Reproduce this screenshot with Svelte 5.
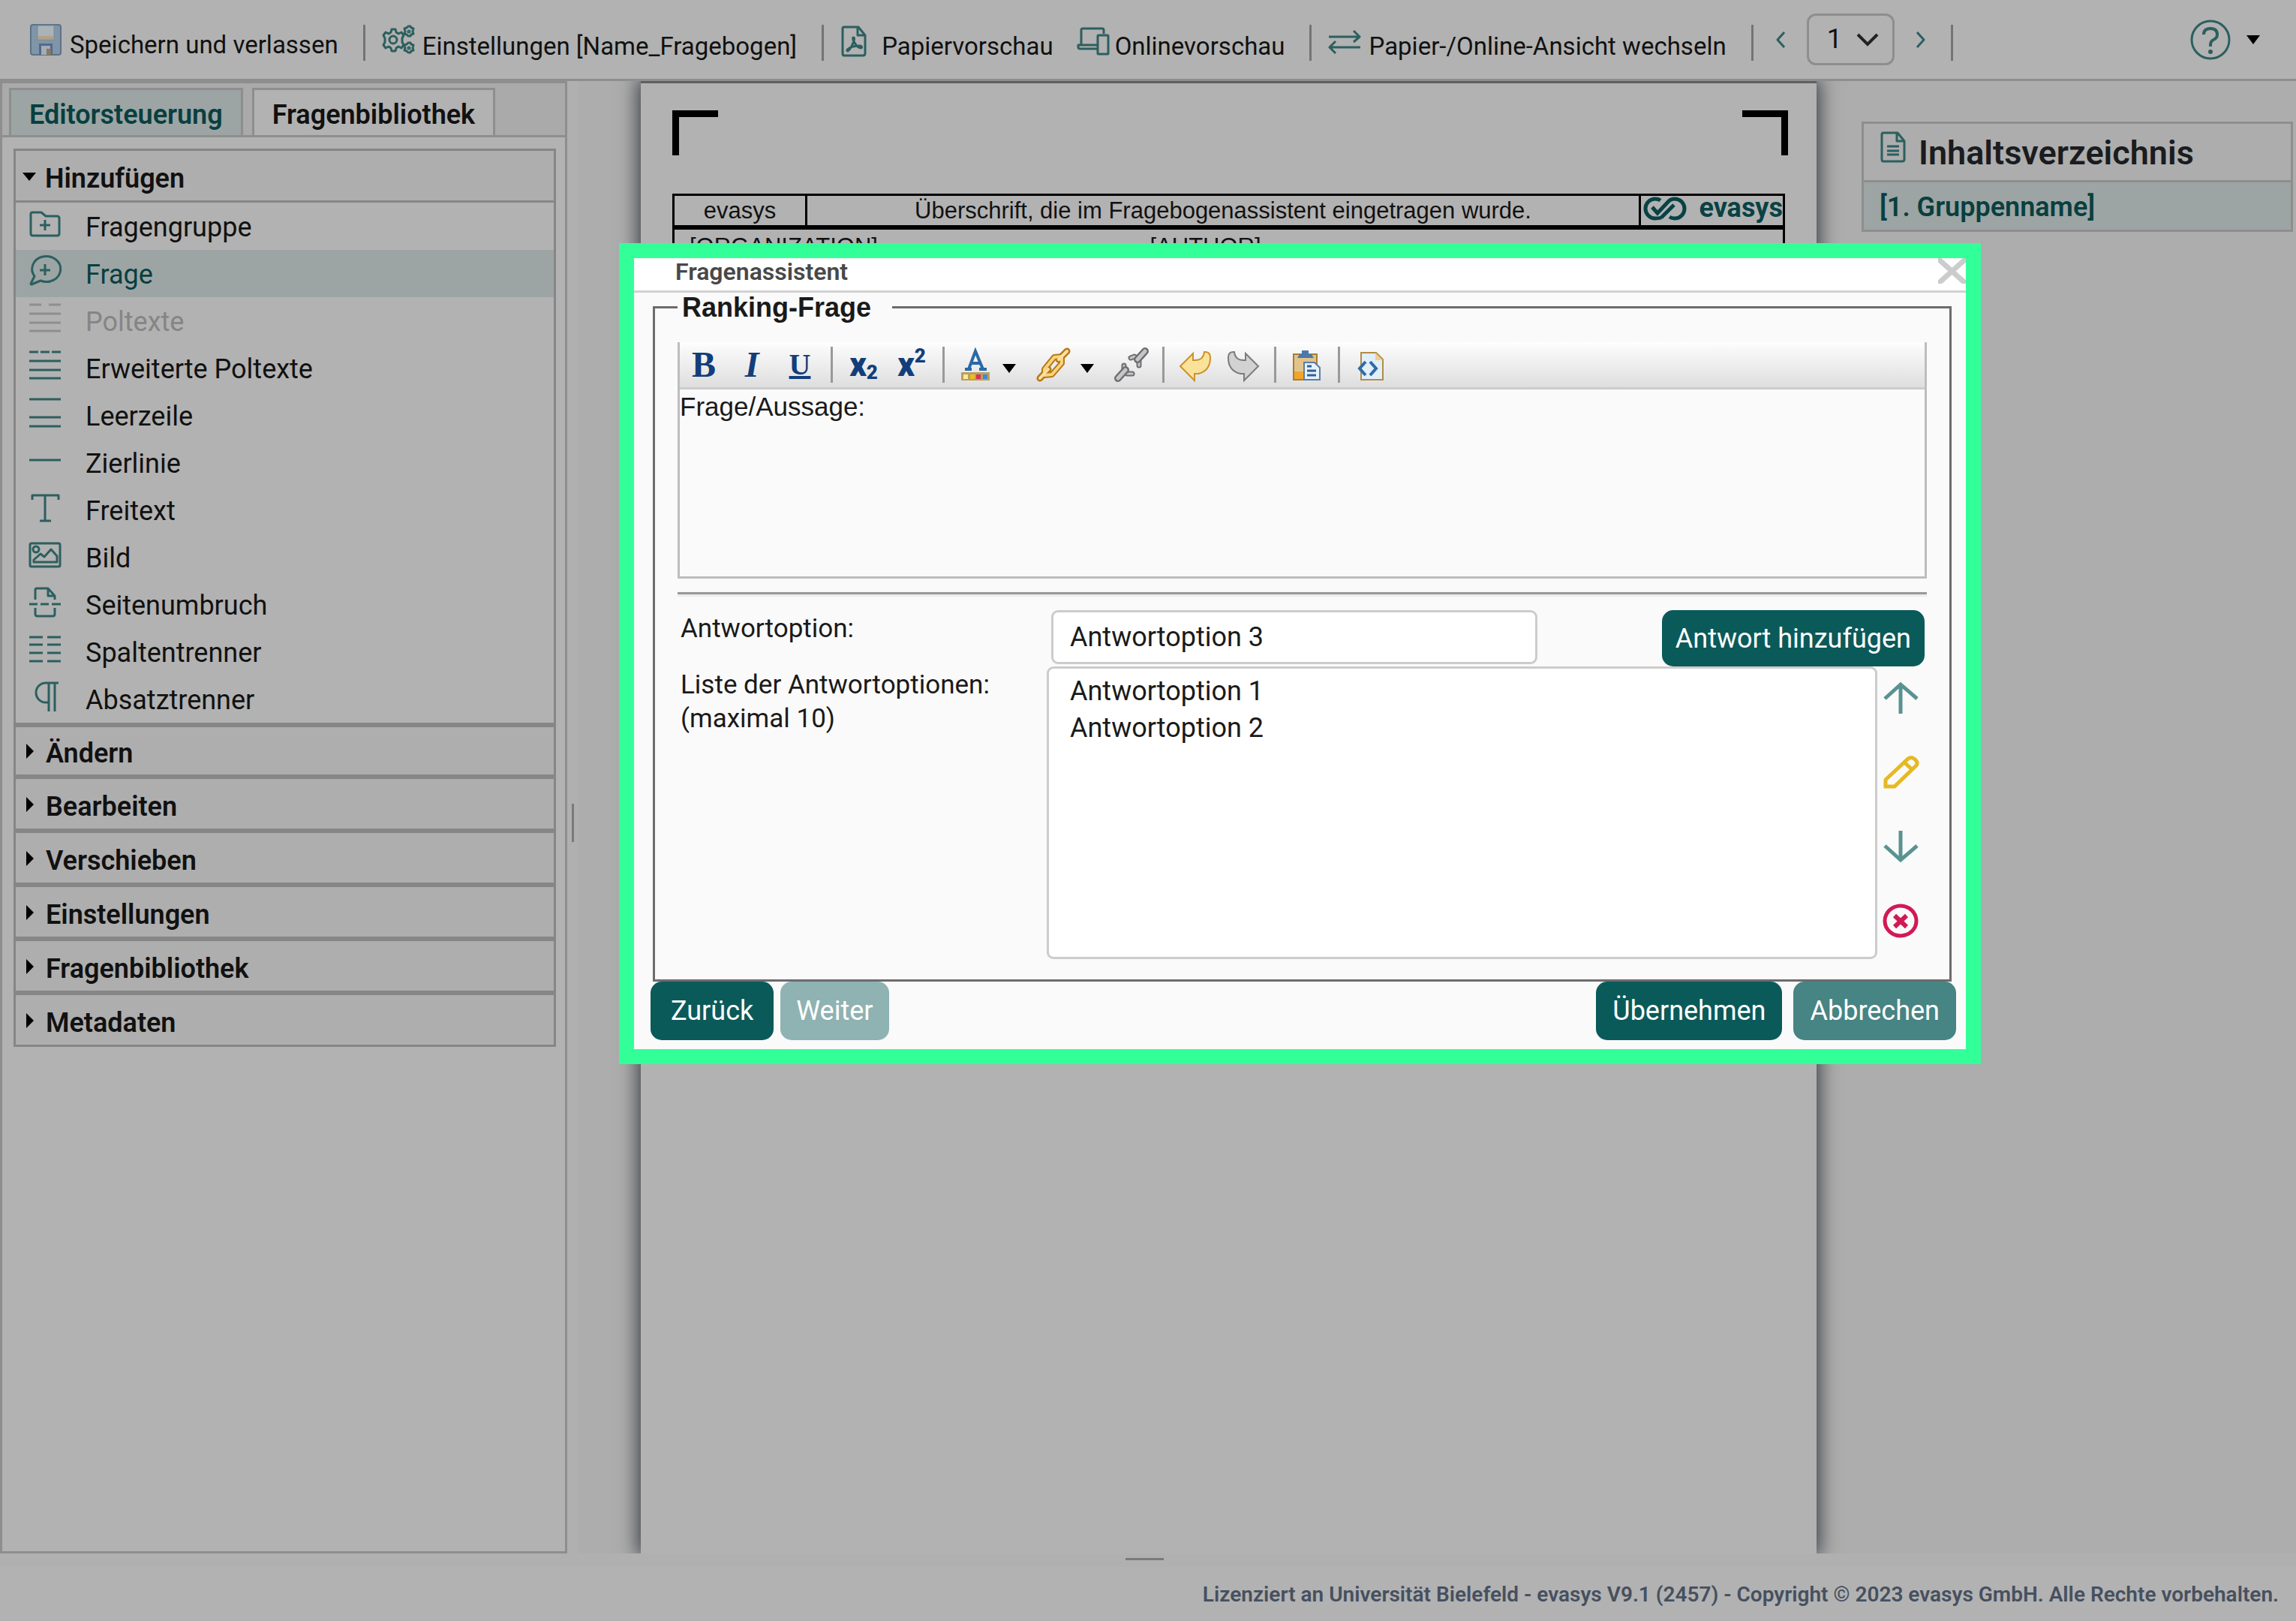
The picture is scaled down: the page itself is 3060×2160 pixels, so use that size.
<script lang="ts">
  type Item = { label: string; icon: string; state?: 'active' | 'disabled' }

  const items: Item[] = [
    { label: 'Fragengruppe', icon: 'M4 6h12l6 5h15q3 0 3 3v20q0 3-3 3H5q-3 0-3-3V8q0-2 2-2zM21 16v14M14 23h14' },
    { label: 'Frage', icon: 'M7 28A19 17 0 1 1 15 34L3 39Q1 39 3 36ZM21 12v15M14 20h14', state: 'active' },
    { label: 'Poltexte', icon: 'M0 3h16M26 3h16M0 15h42M0 27h42M0 38h42', state: 'disabled' },
    { label: 'Erweiterte Poltexte', icon: 'M0 3h12M15 3h12M30 3h12M0 15h42M0 27h42M0 38h42' },
    { label: 'Leerzeile', icon: 'M0 3h42M0 27h42M0 39h42' },
    { label: 'Zierlinie', icon: 'M0 21h42' },
    { label: 'Freitext', icon: 'M4 11V5h35v6M21 5v34M14 39h15' },
    { label: 'Bild', icon: 'M3 6h36q2 0 2 2v27q0 2-2 2H3q-2 0-2-2V8q0-2 2-2zM13 14a4 4 0 1 1-8 0 4 4 0 0 1 8 0M6 31V28l9-8 5 4 9-10 8 9v8z' },
    { label: 'Seitenumbruch', icon: 'M8 18V5q0-2 2-2h15l9 10v5M25 3v10h9M0 24h11M15 24h11M30 24h12M8 29v8q0 3 3 3h20q3 0 3-3v-8' },
    { label: 'Spaltentrenner', icon: 'M0 5h18M24 5h18M0 15h18M24 15h18M0 26h18M24 26h18M0 37h18M24 37h18' },
    { label: 'Absatztrenner', icon: 'M39 3H22a13 13 0 0 0 0 26h4M26 3v38M34 3v38' },
  ]

  const sections = ['Ändern', 'Bearbeiten', 'Verschieben', 'Einstellungen', 'Fragenbibliothek', 'Metadaten']

  let answer = $state('Antwortoption 3')
  let answers = $state(['Antwortoption 1', 'Antwortoption 2'])

  function addAnswer() {
    if (answer.trim() && answers.length < 10) {
      answers.push(answer)
      answer = ''
    }
  }
</script>

<div class="app">
  <header class="topbar">
    <button class="tool save">
      <svg class="icon-42" viewBox="0 0 42 42">
        <rect x="1" y="1" width="40" height="40" rx="3" fill="#8095a8" stroke="#5d7286" stroke-width="2" />
        <rect x="10" y="2" width="22" height="19" fill="#a9b3b8" stroke="#7d8a94" />
        <path d="M11 16h20v4H11z" fill="#b3a184" />
        <rect x="12" y="26" width="18" height="15" fill="#4e6a90" />
        <path d="M15 29h12v12H15z" fill="#a6acb4" />
        <path d="M22 33h6v8h-6z" fill="#8b7861" />
      </svg>
      Speichern und verlassen
    </button>
    <span class="sep"></span>
    <button class="tool settings low">
      <svg class="icon-42 line" viewBox="0 0 42 42">
        <path d="M12 5h5l1 4 3 2 4-2 3 4-2 4v5l2 4-3 4-4-2-3 2-1 4h-5l-1-4-3-2-4 2-3-4 2-4v-5l-2-4 3-4 4 2 3-2z" />
        <circle cx="14" cy="19" r="5" />
        <path d="M34 1h3l1 2 3 1-1 4 1 3-3 1-1 2h-3l-2-2-3-1 1-3-1-4 3-1zM34 23h3l1 2 3 1-1 4 1 3-3 1-1 2h-3l-2-2-3-1 1-3-1-4 3-1z" />
        <circle cx="35" cy="8" r="1" />
        <circle cx="35" cy="30" r="1" />
      </svg>
      Einstellungen [Name_Fragebogen]
    </button>
    <span class="sep"></span>
    <button class="tool paper-view low">
      <svg class="icon-pdf line" viewBox="0 0 34 42">
        <path d="M4 2h19l9 11v24q0 3-3 3H4q-2 0-2-3V4q0-2 2-2zM22 2v11h10" />
        <path d="M16 16q3 0 0 7-3 8-7 11-3-1 2-4 6-3 14-3 4 1 2 3-5 0-9-7-3-4-2-7z" />
      </svg>
      Papiervorschau
    </button>
    <button class="tool online low">
      <svg class="icon-42 line" viewBox="0 0 42 42">
        <path d="M5 25V6q0-2 2-2h26q2 0 2 2v5M26 26H1v3q0 2 3 2h22" />
        <rect x="27" y="13" width="14" height="25" rx="1" />
      </svg>
      Onlinevorschau
    </button>
    <span class="sep"></span>
    <button class="tool swap low">
      <svg class="icon-42 line" viewBox="0 0 42 42">
        <path d="M0 15h41M33 7l8 8-8 7M42 29H1M9 21l-8 8 8 8" />
      </svg>
      Papier-/Online-Ansicht wechseln
    </button>
    <span class="sep"></span>
    <nav class="pager" aria-label="Seite">
      <button aria-label="Vorherige Seite">
        <svg class="chev line" viewBox="0 0 14 24"><path d="M12 2L3 12l9 10" /></svg>
      </button>
      <span class="page-select">
        <select aria-label="Seitenzahl"><option>1</option></select>
        <svg viewBox="0 0 30 18"><path d="M2 2l13 13L28 2" /></svg>
      </span>
      <button aria-label="Nächste Seite">
        <svg class="chev line" viewBox="0 0 14 24"><path d="M2 2l9 10-9 10" /></svg>
      </button>
    </nav>
    <span class="sep"></span>
    <button class="help" aria-label="Hilfe">
      <svg class="icon-help line" viewBox="0 0 54 54">
        <circle cx="27" cy="27" r="25" />
        <path class="mark" d="M18 20q0-8 9-8t9 8q0 5-5 7-4 2-4 7v2" />
        <circle class="dot" cx="27" cy="43" r="3" />
      </svg>
      <span class="caret"></span>
    </button>
  </header>

  <main class="workspace">
    <aside class="sidebar">
      <div class="tabs">
        <button class="tab active">Editorsteuerung</button>
        <button class="tab">Fragenbibliothek</button>
      </div>
      <div class="accordion">
        <section class="section open">
          <button class="section-head"><span class="marker"></span>Hinzufügen</button>
          <ul>
            {#each items as item}
              <li>
                <button class="entry {item.state ?? ''}" disabled={item.state === 'disabled'}>
                  <svg class="icon-42" viewBox="0 0 42 42"><path d={item.icon} /></svg>
                  {item.label}
                </button>
              </li>
            {/each}
          </ul>
        </section>
        {#each sections as name}
          <section class="section">
            <button class="section-head"><span class="marker"></span>{name}</button>
          </section>
        {/each}
      </div>
    </aside>
    <div class="splitter"><span></span></div>

    <div class="canvas">
      <article class="paper">
        <div class="corners"><i class="corner left"></i><i class="corner right"></i></div>
        <div class="form-head">
          <div class="form-row">
            <span class="cell name">evasys</span>
            <span class="cell title">Überschrift, die im Fragebogenassistent eingetragen wurde.</span>
            <span class="cell brand">
              <svg viewBox="0 0 58 32">
                <path d="M24 28Q21 29 16 29A13 13 0 0 1 16 3q4 0 7 2M12 14l7 8L34 6q3-3 8-3a13 13 0 0 1 0 26q-4 0-7-2M24 28L41 11" />
              </svg>
              <b>evasys</b>
            </span>
          </div>
          <div class="form-meta"><span>[ORGANIZATION]</span><span>[AUTHOR]</span></div>
        </div>
      </article>
    </div>

    <aside class="toc">
      <h2>
        <svg class="icon-pdf line" viewBox="0 0 34 42">
          <path d="M4 2h19l9 11v24q0 3-3 3H4q-2 0-2-3V4q0-2 2-2zM22 2v11h10M9 20h16M9 26h16M9 31h16" />
        </svg>
        Inhaltsverzeichnis
      </h2>
      <a href="#gruppe-1">[1. Gruppenname]</a>
    </aside>
  </main>

  <div class="bottom-handle"><span></span></div>
  <footer>
    Lizenziert an Universität Bielefeld - evasys V9.1 (2457) - Copyright © 2023 evasys GmbH. Alle Rechte vorbehalten.
  </footer>

  <div class="dialog" role="dialog" aria-labelledby="dialog-title">
    <div class="dialog-head">
      <h1 id="dialog-title">Fragenassistent</h1>
      <button class="close" aria-label="Schließen">
        <svg viewBox="0 0 37 34"><path d="M-1 0l38 34M38 0L0 34" /></svg>
      </button>
    </div>

    <fieldset>
      <legend>Ranking-Frage</legend>

      <div class="editor">
        <div class="editor-bar">
          <button class="ed glyph bold" aria-label="Fett">B</button>
          <button class="ed glyph italic" aria-label="Kursiv">I</button>
          <button class="ed glyph underline" aria-label="Unterstrichen">U</button>
          <span class="ed-sep"></span>
          <button class="ed script" aria-label="Tiefgestellt">x<sub>2</sub></button>
          <button class="ed script" aria-label="Hochgestellt">x<sup>2</sup></button>
          <span class="ed-sep"></span>
          <button class="ed menu" aria-label="Textfarbe">
            <svg class="ed-icon" viewBox="0 0 44 44">
              <path d="M13 28L22 4l10 24M16 20h12M8 28h9M27 28h10" fill="none" stroke="#2a68a8" stroke-width="4" />
              <path d="M3 32h38v11H3z" fill="#b9a05c" />
              <path d="M6 35h6v6H6z" fill="#ffe9a0" />
              <path d="M15 35h6v6h-6z" fill="#eebc18" />
              <path d="M23 35h6v6h-6z" fill="#d8315b" />
              <path d="M32 35h6v6h-6z" fill="#3b8ad8" />
            </svg>
            <span class="caret"></span>
          </button>
          <button class="ed menu" aria-label="Link einfügen">
            <svg class="ed-icon" viewBox="0 0 44 44">
              <g fill="none" stroke-linecap="round" stroke-linejoin="round">
                <path d="M10 28l13-16 10-1v9L20 35l-10 1z" stroke="#b47a18" stroke-width="8" />
                <path d="M4 40l11-12M29 15l11-11" stroke="#b47a18" stroke-width="9" />
                <path d="M10 28l13-16 10-1v9L20 35l-10 1z" stroke="#fbd27c" stroke-width="4" />
                <path d="M4 40l11-12M29 15l11-11" stroke="#fde0a0" stroke-width="4" />
              </g>
            </svg>
            <span class="caret"></span>
          </button>
          <button class="ed" aria-label="Link entfernen">
            <svg class="ed-icon" viewBox="0 0 44 44">
              <g fill="none" stroke-linecap="round" stroke-linejoin="round">
                <path d="M12 23v7l4 4h7M21 13l5-2 6 5v7" stroke="#6e6e70" stroke-width="7" />
                <path d="M12 23v7l4 4h7M21 13l5-2 6 5v7" stroke="#c6c6c8" stroke-width="3" />
                <path d="M4 40l10-11M40 4L30 15" stroke="#6e6e70" stroke-width="10" />
                <path d="M4 40l10-11M40 4L30 15" stroke="#c6c6c8" stroke-width="5" />
              </g>
            </svg>
          </button>
          <span class="ed-sep"></span>
          <button class="ed" aria-label="Rückgängig">
            <svg class="ed-icon" viewBox="0 0 44 44">
              <path d="M2 24L19 7v9q14 1 15-11 8-1 8 8 0 17-16 21h-5v9z" fill="#fbe29a" stroke="#cd922a" stroke-width="2" />
            </svg>
          </button>
          <button class="ed" aria-label="Wiederholen">
            <svg class="ed-icon" viewBox="0 0 44 44">
              <path d="M42 24L25 7v9Q11 17 10 5 2 4 2 13q0 17 16 21h5v9z" fill="#d2d2d2" stroke="#7c7c7c" stroke-width="2" />
            </svg>
          </button>
          <span class="ed-sep"></span>
          <button class="ed" aria-label="Einfügen">
            <svg class="ed-icon" viewBox="0 0 44 44">
              <path d="M4 8h31v34H4z" fill="#e2c48a" stroke="#a97d35" stroke-width="2" />
              <path d="M5 31h13v10H5z" fill="#f0a52c" />
              <path d="M12 8h3V3h9v5h4l3 5H9z" fill="#4a78ae" />
              <path d="M18 19h14l7 7v16H18z" fill="#e8f1fa" stroke="#5c7ea6" stroke-width="2" />
              <path d="M22 24h6M22 30h12M22 36h12" stroke="#2f609b" stroke-width="3" />
            </svg>
          </button>
          <span class="ed-sep"></span>
          <button class="ed" aria-label="Quelltext">
            <svg class="ed-icon" viewBox="0 0 44 44">
              <path d="M9 6h20l9 9v27H9z" fill="#e2eef8" stroke="#b08c46" stroke-width="2" />
              <path d="M28 6v10h10z" fill="#ecd08c" />
              <path d="M15 18l-8 9 8 9M21 18l8 9-8 9" fill="none" stroke="#2f6ba6" stroke-width="4" />
            </svg>
          </button>
        </div>
        <div class="editor-text" contenteditable="true" role="textbox" tabindex="0" aria-label="Fragetext">Frage/Aussage:</div>
      </div>

      <hr />

      <div class="field">
        <label for="answer">Antwortoption:</label>
        <input id="answer" type="text" bind:value={answer} />
        <button class="btn add" onclick={addAnswer}>Antwort hinzufügen</button>
      </div>
      <div class="field">
        <label for="answers">Liste der Antwortoptionen:<br />(maximal 10)</label>
        <select id="answers" multiple>
          {#each answers as entry}
            <option>{entry}</option>
          {/each}
        </select>
        <div class="order">
          <button aria-label="Nach oben">
            <svg class="arrow" viewBox="0 0 45 42"><path d="M22 42V3M1 22L22 3l22 19" /></svg>
          </button>
          <button aria-label="Bearbeiten">
            <svg class="edit" viewBox="0 0 45 42"><path d="M2 31L32 3q4-3 8 0 6 4 3 9L14 40H2zM27 8l10 9" /></svg>
          </button>
          <button aria-label="Nach unten">
            <svg class="arrow" viewBox="0 0 45 42"><path d="M22 0v39M1 20l21 19 22-19" /></svg>
          </button>
          <button aria-label="Löschen">
            <svg class="remove" viewBox="0 0 45 42"><ellipse cx="22" cy="21" rx="21" ry="20" /><path class="x" d="M14 14l16 15M30 14L14 29" /></svg>
          </button>
        </div>
      </div>
    </fieldset>

    <div class="actions">
      <button class="btn wide">Zurück</button>
      <button class="btn next" disabled>Weiter</button>
      <span class="grow"></span>
      <button class="btn">Übernehmen</button>
      <button class="btn cancel">Abbrechen</button>
    </div>
  </div>
</div>

<style>
  :global(body) {
    margin: 0;
    background: #b2b2b2;
  }
  .app {
    --teal: #2d5f5f;
    --teal-dark: #093f40;
    --line: #8e8e8e;
    position: relative;
    display: flex;
    flex-direction: column;
    min-height: 100vh;
    font-family: Roboto, 'Noto Sans', sans-serif;
    font-size: 36px;
    line-height: 45px;
    color: #111;
  }
  button,
  input,
  select {
    font: inherit;
    color: inherit;
  }
  button {
    padding: 0;
    border: 0;
    background: none;
    text-align: left;
    white-space: nowrap;
  }
  svg {
    display: block;
    flex: none;
    overflow: visible;
  }
  .line {
    fill: none;
    stroke: var(--teal);
    stroke-width: 3;
    stroke-linejoin: round;
  }
  .icon-42 {
    width: 42px;
    height: 42px;
  }
  .icon-pdf {
    width: 34px;
    height: 42px;
  }
  .caret {
    border: 9px solid transparent;
    border-top: 12px solid #000;
    border-bottom: 0;
  }

  .topbar {
    display: flex;
    align-items: center;
    height: 105px;
    padding: 0 48px 0 40px;
    border-bottom: 3px solid var(--line);
    background: #b2b2b2;
  }
  .tool {
    display: flex;
    align-items: center;
    gap: 11px;
    padding-top: 13px;
    font-size: 33px;
  }
  .low {
    padding-top: 17px;
  }
  .tool svg {
    margin-bottom: 12px;
  }
  .paper-view {
    gap: 20px;
  }
  .online {
    gap: 8px;
    margin-left: 32px;
  }
  .sep {
    width: 3px;
    height: 48px;
    margin: 8px 23px 0 33px;
    background: #747474;
  }
  .pager {
    display: flex;
    align-items: center;
    gap: 28px;
    margin-left: 6px;
  }
  .chev {
    width: 14px;
    height: 24px;
  }
  .page-select {
    position: relative;
  }
  .page-select select {
    display: block;
    box-sizing: border-box;
    width: 117px;
    height: 69px;
    padding: 0 24px;
    border: 3px solid var(--line);
    border-radius: 12px;
    background: transparent;
    appearance: none;
  }
  .page-select svg {
    position: absolute;
    top: 26px;
    right: 21px;
    width: 30px;
    height: 18px;
    fill: none;
    stroke: #222;
    stroke-width: 4;
    pointer-events: none;
  }
  .help {
    display: flex;
    align-items: center;
    gap: 21px;
    margin-left: auto;
  }
  .icon-help {
    width: 54px;
    height: 54px;
  }
  .icon-help .mark {
    stroke-width: 4;
  }
  .icon-help .dot {
    fill: var(--teal);
    stroke: none;
  }

  .workspace {
    display: flex;
    flex: 1;
    overflow: hidden;
    background: #adadad;
  }
  .sidebar {
    box-sizing: border-box;
    flex: none;
    width: 756px;
    border: 3px solid var(--line);
    background: #b2b2b2;
  }
  .tabs {
    display: flex;
    gap: 12px;
    padding: 6px 9px 0;
    border-bottom: 3px solid var(--line);
    background: #aaa;
  }
  .tab {
    height: 63px;
    padding: 5px 24px 0;
    border: 3px solid var(--line);
    border-bottom: 0;
    background: #b2b2b2;
    font-weight: 600;
    line-height: 57px;
  }
  .tab.active {
    background: #9ca5a4;
    color: var(--teal-dark);
  }
  .accordion {
    margin: 15px 12px 0 15px;
  }
  .section {
    border: 3px solid #868686;
    background: #b2b2b2;
  }
  .section-head {
    display: flex;
    align-items: center;
    width: 100%;
    height: 66px;
    padding: 8px 0 0 39px;
    background: #aeaeae;
    font-weight: 600;
  }
  .open + .section .section-head {
    height: 63px;
  }
  .marker {
    width: 0;
    margin: 0 16px 7px -25px;
    border: 10px solid transparent;
    border-left: 10px solid #000;
    border-right: 0;
  }
  .open .marker {
    margin: 0 12px 6px -30px;
    border: 9px solid transparent;
    border-top: 11px solid #000;
    border-bottom: 0;
  }
  .open .section-head {
    border-bottom: 3px solid #868686;
    height: 69px;
  }
  ul {
    margin: 0;
    padding: 0;
    list-style: none;
  }
  .entry {
    display: flex;
    align-items: center;
    gap: 33px;
    width: 100%;
    height: 63px;
    padding: 4px 0 0 18px;
  }
  .entry svg {
    margin-bottom: 12px;
    fill: none;
    stroke: var(--teal);
    stroke-width: 3;
    stroke-linejoin: round;
  }
  .entry.active {
    background: #9ca5a4;
    color: var(--teal-dark);
  }
  .entry.disabled {
    color: #858585;
  }
  .entry.disabled svg {
    stroke: #8e8e8e;
  }
  .splitter {
    display: flex;
    align-items: center;
    flex: none;
    width: 15px;
    background: #b0b0b0;
  }
  .splitter span {
    width: 3px;
    height: 51px;
    margin: 14px 0 0 6px;
    background: #7a7a7a;
  }

  .canvas {
    display: flex;
    flex: 1;
    padding: 0 60px 0 83px;
  }
  .paper {
    flex: 1;
    padding: 36px 42px 0;
    border-top: 3px solid #5f5f5f;
    background: #b2b2b2;
    box-shadow: 0 0 24px 4px #3c3f46;
  }
  .corners {
    display: flex;
    justify-content: space-between;
    margin-right: -4px;
  }
  .corner {
    width: 52px;
    height: 51px;
    border-top: 9px solid #000;
  }
  .corner.left {
    border-left: 9px solid #000;
  }
  .corner.right {
    border-right: 9px solid #000;
  }
  .form-head {
    height: 300px;
    margin-top: 51px;
    border: 3px solid #000;
    font-family: 'Liberation Sans', Arial, sans-serif;
    font-size: 31px;
    line-height: 39px;
  }
  .form-row {
    display: flex;
    border-bottom: 6px solid #000;
    text-align: center;
  }
  .cell.name {
    width: 174px;
  }
  .cell.title {
    flex: 1;
    border: solid #000;
    border-width: 0 3px;
  }
  .cell.brand {
    display: flex;
    align-items: center;
    justify-content: space-between;
    box-sizing: border-box;
    width: 189px;
    padding: 0 0 6px 3px;
    font-family: Roboto, sans-serif;
    line-height: 33px;
    color: #094244;
  }
  .brand svg {
    width: 58px;
    height: 32px;
    fill: none;
    stroke: #094244;
    stroke-width: 5;
  }
  .brand b {
    font-size: 36px;
  }
  .form-meta {
    display: flex;
    padding: 3px 20px;
  }
  .form-meta span {
    flex: 1 0 610px;
  }
  .form-meta span:last-child {
    flex-basis: 820px;
  }

  .toc {
    box-sizing: border-box;
    flex: none;
    width: 575px;
    height: 147px;
    margin: 54px 4px 0 0;
    border: 3px solid var(--line);
  }
  .toc h2 {
    display: flex;
    align-items: center;
    gap: 17px;
    height: 73px;
    margin: 0;
    padding: 2px 0 0 22px;
    border-bottom: 3px solid var(--line);
    font-size: 45px;
    font-weight: 600;
    color: #1a1c20;
  }
  .toc h2 svg {
    margin-bottom: 16px;
  }
  .toc a {
    display: block;
    padding: 4px 0 0 21px;
    background: #9ca5a4;
    font-weight: 600;
    line-height: 59px;
    color: var(--teal-dark);
    text-decoration: none;
  }
  .bottom-handle {
    display: flex;
    justify-content: center;
    height: 12px;
    padding: 6px 9px 0 0;
    background: #b0b0b0;
  }
  .bottom-handle span {
    width: 51px;
    height: 3px;
    background: #7a7a7a;
  }
  footer {
    height: 54px;
    padding: 14px 23px 4px;
    font-size: 28px;
    font-weight: 600;
    text-align: right;
    color: #46505f;
  }

  .dialog {
    position: absolute;
    top: 324px;
    left: 825px;
    right: 420px;
    border: 20px solid #33ff99;
    background: #fafafa;
    color: #1a1a1a;
  }
  .dialog-head {
    display: flex;
    justify-content: space-between;
    height: 43px;
    padding-left: 55px;
    border-bottom: 3px solid #d2d2d2;
    background: #fff;
  }
  .dialog-head h1 {
    margin: 0;
    font-size: 32px;
    font-weight: 600;
    line-height: 36px;
    color: #484848;
  }
  .close {
    width: 37px;
    height: 34px;
    overflow: hidden;
  }
  .close svg {
    width: 37px;
    height: 34px;
    fill: none;
    stroke: #ccc;
    stroke-width: 7;
  }
  fieldset {
    margin: 0 19px 0 25px;
    padding: 27px 30px;
    border: 3px solid #6c6c6c;
  }
  legend {
    padding: 0 28px 0 6px;
    font-family: 'Liberation Sans', Arial, sans-serif;
    font-size: 36px;
    font-weight: 700;
    line-height: 39px;
  }
  .editor {
    border: 3px solid #bdbdbd;
    border-top: 0;
  }
  .editor-bar {
    display: flex;
    align-items: center;
    height: 60px;
    border-bottom: 3px solid #ccc;
    background: linear-gradient(#fff, #fafafa 10%, #dedede);
  }
  .ed {
    display: flex;
    align-items: center;
    justify-content: center;
    width: 44px;
    height: 48px;
    margin: 0 10px;
    color: #123e7a;
    line-height: 48px;
  }
  .ed.menu {
    justify-content: flex-start;
    gap: 14px;
    width: 80px;
    margin-right: 14px;
  }
  .ed.menu .caret {
    margin-top: 10px;
  }
  .glyph {
    font-family: 'Liberation Serif', serif;
    font-size: 48px;
    font-weight: 700;
  }
  .glyph.italic {
    font-style: italic;
  }
  .glyph.underline {
    font-size: 40px;
    text-decoration: underline;
  }
  .script {
    font-size: 44px;
    font-weight: 900;
  }
  .script sub,
  .script sup {
    font-size: 26px;
    line-height: 26px;
  }
  .script sub {
    margin-top: 20px;
  }
  .script sup {
    margin-bottom: 24px;
  }
  .ed-icon {
    width: 44px;
    height: 44px;
  }
  .ed-sep {
    width: 3px;
    height: 48px;
    margin: 0 9px;
    background: #999;
  }
  .editor-text {
    height: 249px;
    font-family: 'Liberation Sans', Arial, sans-serif;
    font-size: 35px;
  }
  hr {
    height: 0;
    margin: 18px 0;
    border: solid;
    border-width: 3px 0;
    border-color: #999 transparent #ececec;
  }
  .field {
    display: flex;
    align-items: flex-start;
  }
  .field label {
    flex: none;
    width: 488px;
    padding: 2px 0 0 4px;
    font-size: 35px;
  }
  .field input {
    box-sizing: border-box;
    width: 648px;
    height: 72px;
    margin-left: 6px;
    padding: 0 22px;
    border: 3px solid #ccc;
    border-radius: 9px;
    background: #fff;
  }
  .add {
    margin: 0 3px 0 auto;
  }
  .field select {
    flex: 1;
    height: 390px;
    padding: 6px 25px;
    border: 3px solid #ccc;
    border-radius: 9px;
    background: #fff;
    box-sizing: border-box;
    overflow: hidden;
    appearance: none;
  }
  .field option {
    padding: 3px;
  }
  .order {
    display: flex;
    flex-direction: column;
    gap: 57px;
    padding: 21px 12px 0 9px;
  }
  .order svg {
    width: 45px;
    height: 42px;
    fill: none;
    stroke-width: 5;
  }
  .arrow {
    stroke: #5a9292;
  }
  .edit {
    stroke: #e6b923;
  }
  .remove {
    stroke: #d11a55;
  }
  .remove .x {
    stroke-width: 6;
  }
  .btn {
    height: 78px;
    padding: 0 22px;
    border-radius: 15px;
    background: #0b5a5a;
    color: #fff;
    text-align: center;
  }
  .btn.add {
    height: 75px;
    padding: 2px 18px 0;
  }
  .actions {
    display: flex;
    gap: 9px;
    padding: 0 13px 12px 22px;
  }
  .btn.wide {
    padding: 0 27px;
  }
  .btn.next {
    padding: 0 21px;
    background: #8fb2b2;
  }
  .btn.cancel {
    margin-left: 6px;
    background: #478484;
  }
  .grow {
    flex: 1;
  }
</style>
